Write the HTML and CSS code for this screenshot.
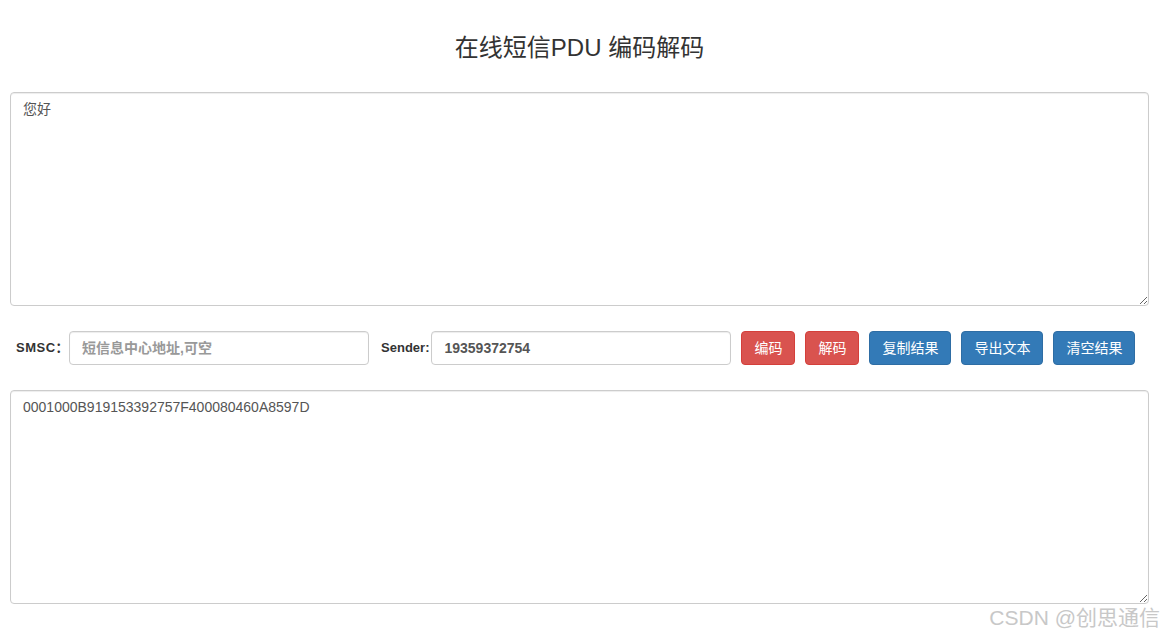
FILE: index.html
```html
<!DOCTYPE html>
<html lang="zh-CN">
<head>
  <meta charset="UTF-8">
  <meta name="viewport" content="width=device-width, initial-scale=1.0">
  <title>在线短信PDU 编码解码</title>
  <link rel="stylesheet" href="styles.css">
</head>
<body>
  <div class="page">
    <h1 class="title">在线短信PDU 编码解码</h1>

    <!-- input text -->
    <textarea class="box" id="source">您好</textarea>

    <div class="toolbar">
      <label class="label label-smsc" for="smsc">SMSC：</label>
      <input type="text" class="field" id="smsc" placeholder="短信息中心地址,可空">
      <label class="label label-sender" for="sender">Sender:</label>
      <input type="text" class="field" id="sender" value="19359372754">
      <button class="btn btn-red">编码</button>
      <button class="btn btn-red">解码</button>
      <button class="btn btn-blue">复制结果</button>
      <button class="btn btn-blue">导出文本</button>
      <button class="btn btn-blue">清空结果</button>
    </div>

    <!-- result -->
    <textarea class="box" id="result">0001000B919153392757F400080460A8597D</textarea>

    <div class="watermark">CSDN @创思通信</div>
  </div>
</body>
</html>
```

FILE: styles.css
```css
* {
  margin: 0;
  padding: 0;
  box-sizing: border-box;
}

body {
  background-color: #fff;
  color: #333;
  font-family: "Liberation Sans", "Noto Sans CJK SC", sans-serif;
  font-size: 14px;
  line-height: 20px;
}

.page {
  width: 1139px;
  margin-left: 10px;
}

.title {
  font-size: 24px;
  font-weight: normal;
  line-height: 32px;
  text-align: center;
  padding-top: 32px;
  margin-bottom: 28px;
  color: #333;
}

.box {
  display: block;
  width: 100%;
  height: 214px;
  padding: 6px 12px;
  border: 1px solid #ccc;
  border-radius: 4px;
  box-shadow: inset 0 1px 1px rgba(0, 0, 0, 0.075);
  font-family: inherit;
  font-size: 14px;
  line-height: 20px;
  color: #555;
}

.toolbar {
  display: flex;
  align-items: center;
  height: 34px;
  margin: 25px 0;
}

.label {
  font-size: 13px;
  font-weight: bold;
  color: #333;
}

.label-smsc {
  margin-left: 6px;
  letter-spacing: 0.5px;
}

.label-sender {
  margin-left: 12px;
  margin-right: 2px;
}

.field {
  width: 300px;
  height: 34px;
  padding: 6px 12px;
  border: 1px solid #ccc;
  border-radius: 4px;
  box-shadow: inset 0 1px 1px rgba(0, 0, 0, 0.075);
  font-family: inherit;
  font-size: 14px;
  font-weight: bold;
  color: #555;
}

.field::placeholder {
  color: #999;
}

.btn {
  height: 34px;
  margin-left: 10px;
  padding: 6px 12px;
  border: 1px solid transparent;
  border-radius: 4px;
  font-family: inherit;
  font-size: 14px;
  line-height: 20px;
  color: #fff;
  cursor: pointer;
}

.btn-red {
  background-color: #d9534f;
  border-color: #d43f3a;
}

.btn-blue {
  background-color: #337ab7;
  border-color: #2e6da4;
}

.watermark {
  text-align: right;
  margin-right: -11px;
  font-size: 21px;
  line-height: 28px;
  color: #c8c8c8;
}
```
